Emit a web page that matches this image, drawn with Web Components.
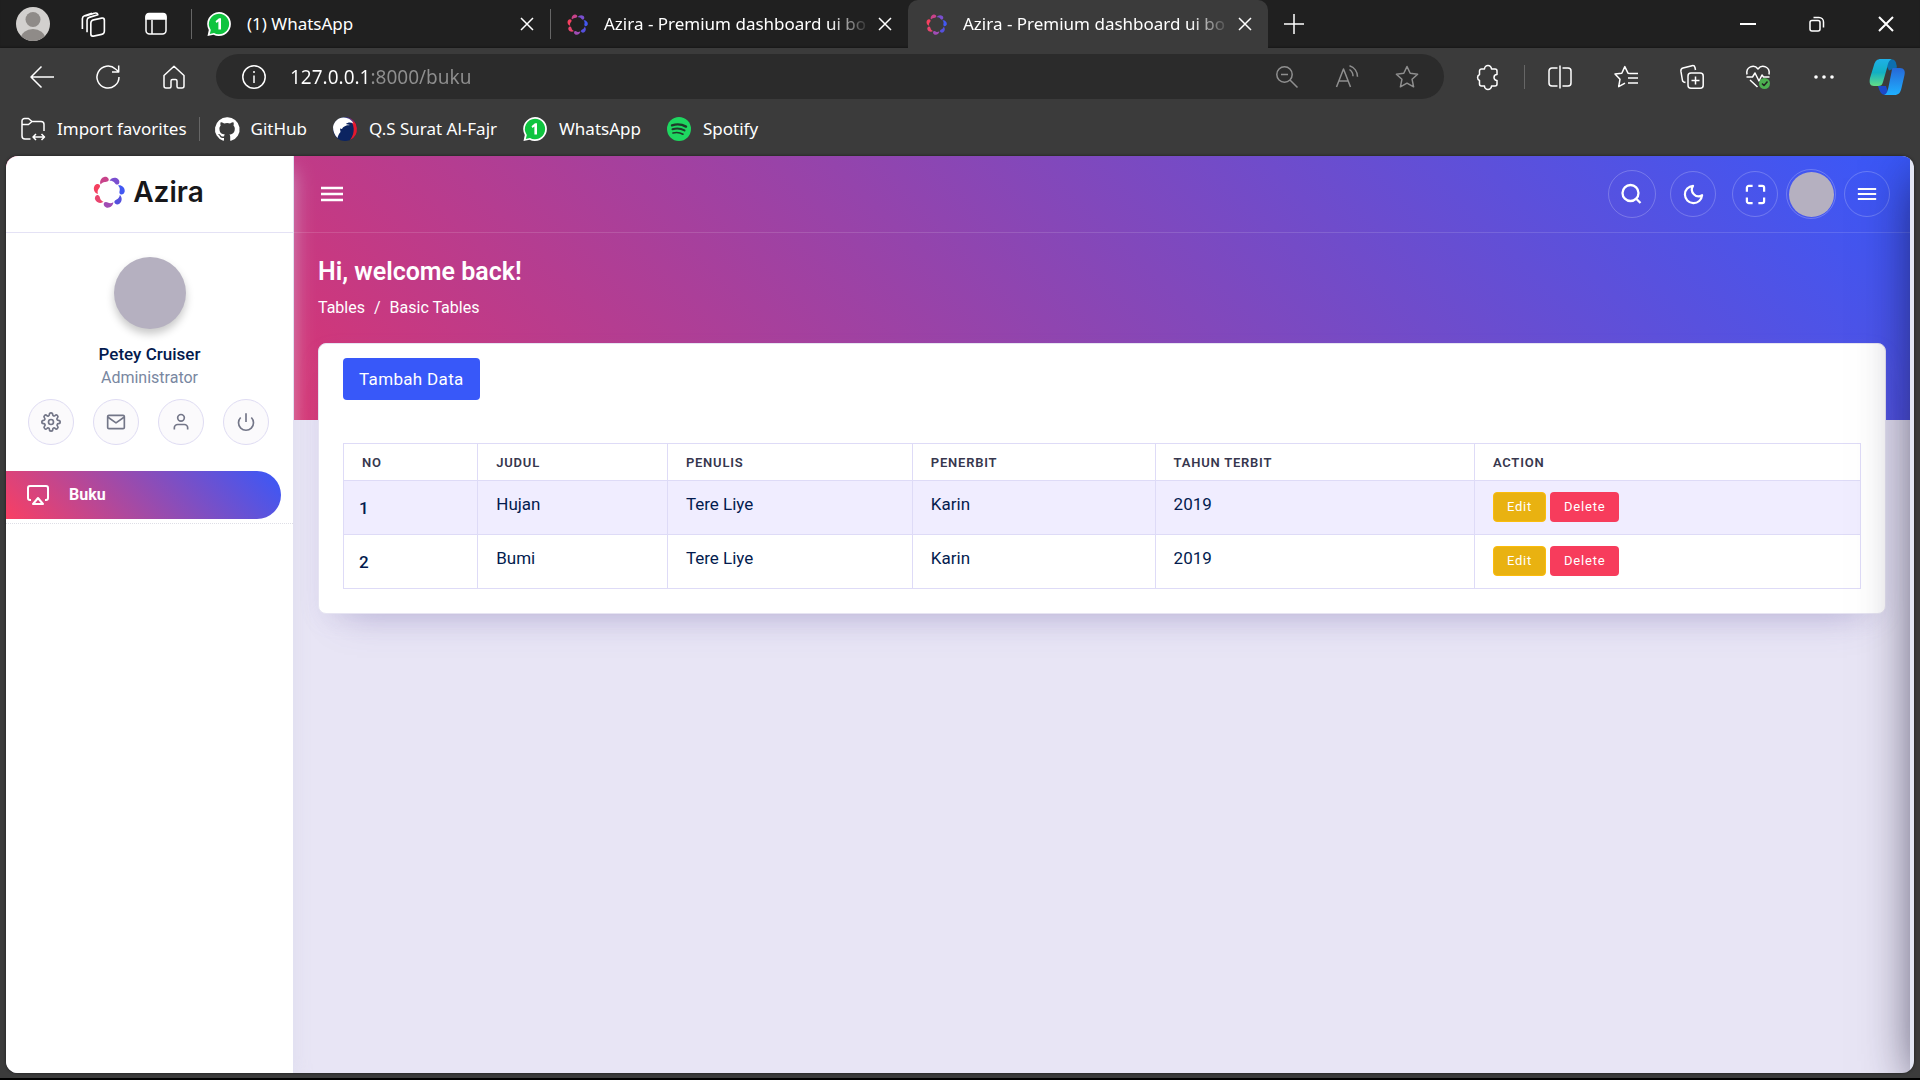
<!DOCTYPE html>
<html lang="en">
<head>
<meta charset="utf-8">
<meta name="viewport" content="width=device-width, initial-scale=1">
<title>Azira - Premium dashboard ui bo</title>
<style>
  html, body { margin: 0; height: 100%; }
  body { background: #000; overflow: hidden; }
</style>
</head>
<body>
<browser-window>
  <browser-tab slot="tabs" icon="whatsapp" label="(1) WhatsApp"></browser-tab>
  <browser-tab slot="tabs" icon="azira" label="Azira - Premium dashboard ui bo"></browser-tab>
  <browser-tab slot="tabs" icon="azira" label="Azira - Premium dashboard ui bo" active></browser-tab>
  <bookmark-link slot="bookmarks" icon="folder">Import favorites</bookmark-link>
  <bookmark-link slot="bookmarks" icon="github">GitHub</bookmark-link>
  <bookmark-link slot="bookmarks" icon="falcon">Q.S Surat Al-Fajr</bookmark-link>
  <bookmark-link slot="bookmarks" icon="whatsapp">WhatsApp</bookmark-link>
  <bookmark-link slot="bookmarks" icon="spotify">Spotify</bookmark-link>
  <azira-app>
    <azira-sidebar slot="sidebar" name="Petey Cruiser" role-name="Administrator">
      <azira-menu-item icon="airplay">Buku</azira-menu-item>
    </azira-sidebar>
    <azira-topbar></azira-topbar>
    <azira-heading></azira-heading>
    <azira-card><book-table></book-table></azira-card>
  </azira-app>
</browser-window>

<script>
const petals = ['#7a4fcf', '#4258f2', '#5550dd', '#a04cb4', '#e8456f', '#f5405f', '#c8438a'].map((c, i) =>
  `<path fill="${c}" transform="rotate(${i * 360 / 7} 16 16)" d="M16.600 4.800C18 1.800 22.500.8 25.200 3.200 27 5 26.600 7.800 24.900 8.500 23.300 9 22.300 7.800 21.300 6.500 20.200 5.200 18.600 4.700 16.600 4.800Z"/>`).join('');

/* Each entry: [viewBox size, markup]. Line icons inherit the stroke of the host. */
const ICONS = {
  profile: [34, '<g stroke="none"><circle cx="17" cy="17" r="17" fill="#d2d0ce"/><clipPath id="c"><circle cx="17" cy="17" r="17"/></clipPath><g clip-path="url(#c)" fill="#8f8b88"><circle cx="17" cy="12.500" r="7.500"/><ellipse cx="17" cy="31" rx="12" ry="9"/></g></g>'],
  workspaces: [24, '<rect x="10" y="6.800" width="12.500" height="15" rx="2.500" transform="skewY(-12) translate(0 4)"/><path d="M6.500 19.500V8.500a3 3 0 0 1 2-2.600L16.500 3.500a2 2 0 0 0-2.600-1.600L5 4.500M2.200 16.500V7a3 3 0 0 1 2-2.600L11 2"/>'],
  tabactions: [24, '<rect x="2" y="2" width="20" height="20" rx="3.500"/><path d="M2 4.500a3 3 0 0 1 3-3h14a3 3 0 0 1 3 3V7H2Z" fill="currentColor"/><path d="M8 8v14"/>'],
  whatsapp: [24, '<g stroke="none"><path d="M12 0a12 12 0 1 1-5.500 22.700L.5 24l1.300-6A12 12 0 0 1 12 0Z" fill="#fff"/><path d="M12 1.800a10.200 10.200 0 1 1-5 19.100l-4.200 1 1-4A10.200 10.200 0 0 1 12 1.800Z" fill="#0fc43f"/><path d="M8.500 9.200 12 6.200h2v11.300h-2.600V9.400L9.500 11Z" fill="#fff"/></g>'],
  azira: [32, `<g stroke="none">${petals}</g>`],
  close: [14, '<path d="m1 1 12 12m0-12-12 12"/>'],
  plus: [22, '<path d="M11 1v20M1 11h20"/>'],
  min: [16, '<path d="M0 8h16" stroke-width="2"/>'],
  restore: [16, '<rect x="1" y="4.500" width="10" height="10.500" rx="2"/><path d="M4.500 1.500H10A4.500 4.500 0 0 1 14.500 6v5.500"/>'],
  winclose: [16, '<path d="m1 1 14 14M15 1 1 15" stroke-width="2"/>'],
  back: [24, '<path d="M24 12H1M11.500 1.500 1 12l10.500 10.500"/>'],
  refresh: [24, '<path d="M23 12A11 11 0 1 1 19.500 4L22.500 6.500M22.700.5V7H16"/>'],
  home: [24, '<path d="M2 10.500 12 1.200l10 9.300V21a2 2 0 0 1-2 2h-3.500a1.500 1.500 0 0 1-1.500-1.500V16a1.500 1.500 0 0 0-1.500-1.500h-3A1.500 1.500 0 0 0 9 16v5.500A1.500 1.500 0 0 1 7.500 23H4a2 2 0 0 1-2-2Z"/>'],
  info: [24, '<circle cx="12" cy="12" r="11.200"/><path d="M12 10.500V18"/><circle cx="12" cy="7" r="1" fill="currentColor" stroke="none"/>'],
  zoomout: [24, '<circle cx="9.500" cy="9.500" r="7.700"/><path d="m15 15 7.500 7.500M6 9.500h7"/>'],
  read: [24, '<path d="m1.500 22 7-18 7 18M4 16h9M14.500 4.500a8 8 0 0 1 3.500 6.800M14.500.8a11.500 11.500 0 0 1 8 11"/>'],
  star: [24, '<path d="m12 1.500 3.200 6.800 7.400.9-5.500 5.100 1.500 7.500L12 18.200l-6.600 3.600 1.500-7.500L1.400 9.200l7.400-.9Z"/>'],
  ext: [24, '<path d="M5.500 4H8.500a3.500 3.500 0 0 1 7 0H19A2 2 0 0 1 21 6V9.500a3 3 0 0 0 0 6V19a2 2 0 0 1-2 2h-3.500a3.500 3.500 0 0 1-7 0H5.500a2 2 0 0 1-2-2v-3.500a3.300 3.300 0 0 1 0-6V6a2 2 0 0 1 2-2Z"/>'],
  split: [24, '<path d="M9.500 3H4a3 3 0 0 0-3 3v12a3 3 0 0 0 3 3h5.500M14.500 3H20a3 3 0 0 1 3 3v12a3 3 0 0 1-3 3h-5.500M12 .5v23"/>'],
  favs: [24, '<path d="M16 8.500 14 8.200 10.800 1.600 7.800 8.200 1 9l5 5.200-1.300 7.500 6.300-3.500M16 8.500h8M14 13h10M14 18h10"/>'],
  collections: [24, '<rect x="8" y="8" width="15.200" height="15.200" rx="3"/><path d="M15.500 11.500v8M11.500 15.500h8M5.500 17.500 3.800 17a2.500 2.500 0 0 1-1.500-2.500L.9 6.200A3 3 0 0 1 3 3l9-2.300a2.500 2.500 0 0 1 3 1.800l.5 2.500"/>'],
  heart: [24, '<path d="M1 9.500C-.5 2 8-1.500 12 4c4-5.500 12.500-2 11 5.500M.5 12h6L9 8l4 8 3-6 1.500 2h6M4 15l7.500 7"/><circle cx="18.500" cy="18.500" r="5.500" fill="#4caf50" stroke="none"/><path d="m16 18.500 2 2 3.500-4" stroke="#222" stroke-width="1.500"/>'],
  dots: [24, '<g fill="currentColor" stroke="none"><circle cx="4" cy="12" r="1.800"/><circle cx="12" cy="12" r="1.800"/><circle cx="20" cy="12" r="1.800"/></g>'],
  copilot: [36, '<defs><linearGradient id="a" x1="0" y1="0" x2="0" y2="1"><stop offset="0" stop-color="#1fb0e8"/><stop offset=".5" stop-color="#12b0c4"/><stop offset="1" stop-color="#62dc86"/></linearGradient><linearGradient id="b" x1="0" y1="0" x2="0" y2="1"><stop offset="0" stop-color="#2668d8"/><stop offset="1" stop-color="#1fb0ff"/></linearGradient></defs><g stroke="none"><path d="M14 .5h9c3 0 4 2 5 8l-8 3Z" fill="#0d6fae"/><path d="M8 27h9l3 9h-3c-5 0-6-3-8-9Z" fill="#1c49c9"/><path d="M12 0h11c-3 1-4 4-5 9l-4 14c-1 3-2 4-5 4H5c-4 0-5-3-4-8l4-13c1.200-4 3-6 7-6Z" fill="url(#a)"/><path d="M24 9h7c4 0 5.500 3 4.500 7l-3 13c-1.200 5-3 7-7 7H15c3-1 3.500-4 4.500-8l3-15c.5-2 .5-3.500 1.500-4Z" fill="url(#b)"/></g>'],
  folder: [24, '<path d="M9.500 22H4a3 3 0 0 1-3-3V4a2.500 2.500 0 0 1 2.500-2.500h4L11 4.500h9a3 3 0 0 1 3 3V14M1 7.500h6.500L11 4.500M12 20h12M15 17l-3 3 3 3M20.500 17l3 3-3 3"/>'],
  github: [24, '<path fill="#fff" stroke="none" d="M12 .3a12 12 0 0 0-3.800 23.400c.6.100.8-.3.800-.6v-2.200c-3.300.7-4-1.400-4-1.400-.6-1.400-1.400-1.800-1.400-1.800-1-.7.1-.7.1-.7 1.200.1 1.900 1.200 1.900 1.200 1 1.900 2.800 1.300 3.500 1 .1-.8.400-1.300.8-1.600-2.700-.3-5.500-1.300-5.500-6 0-1.200.5-2.300 1.300-3.100-.2-.4-.6-1.600 0-3.200 0 0 1-.3 3.400 1.200a11.500 11.500 0 0 1 6 0c2.300-1.500 3.300-1.200 3.300-1.200.7 1.600.2 2.800.1 3.200.8.800 1.300 1.900 1.300 3.200 0 4.600-2.800 5.600-5.500 5.900.5.400.9 1.100.9 2.300v3.300c0 .3.100.7.800.6A12 12 0 0 0 12 .3"/>'],
  falcon: [24, '<g stroke="none"><circle cx="12" cy="12" r="12" fill="#0c2461"/><path d="M15 .4A12 12 0 0 1 17 22.900 16 16 0 0 0 15 .4Z" fill="#e3192d"/><path d="M12 0a12 12 0 0 1 9.500 5.500L15 2.500Z" fill="#4a3d8c"/><path d="M0 10C1 4 6 0 11 .5c5 .5 8 3 9.500 6-3-1.500-6-1-7.500.5l4 1c-4.500.2-6.500 1.500-8 4l-2-.5.5 3.500C6 16.500 5 18.500 4.500 21 1.500 18.500 0 14 0 10Z" fill="#fff"/></g>'],
  spotify: [24, '<circle cx="12" cy="12" r="12" fill="#1ed760" stroke="none"/><g stroke="#1f3a2a" stroke-linecap="round"><path d="M5 8.300c5-1.500 10-1 14 1.300" stroke-width="2.400"/><path d="M5.500 12.200c4.500-1.200 8.500-.7 12 1.200" stroke-width="2"/><path d="M6 16c3.500-.9 7-.5 10 1.200" stroke-width="1.700"/></g>'],
  menu: [24, '<path d="M1 6h22M1 12h22M1 18h22" stroke-width="2.600"/>'],
  search: [24, '<circle cx="10.500" cy="11" r="8"/><path d="m16.500 17 4 4"/>'],
  moon: [24, '<path d="M21 12.800A9 9 0 1 1 11.500 3a7 7 0 0 0 9.500 9.800Z"/>'],
  expand: [24, '<path d="M3 9V5a2 2 0 0 1 2-2h4M15 3h4a2 2 0 0 1 2 2v4M21 15v4a2 2 0 0 1-2 2h-4M9 21H5a2 2 0 0 1-2-2v-4"/>'],
  gear: [24, '<circle cx="12" cy="12" r="3"/><path d="M19.400 15a1.650 1.650 0 0 0 .33 1.820l.06.06a2 2 0 0 1-2.830 2.830l-.06-.06a1.650 1.650 0 0 0-2.800 1.170V21a2 2 0 0 1-4 0v-.09A1.650 1.650 0 0 0 7.180 19.730l-.06.06a2 2 0 0 1-2.830-2.830l.06-.06A1.650 1.650 0 0 0 3.180 14H3a2 2 0 0 1 0-4h.09A1.650 1.650 0 0 0 4.270 7.180l-.06-.06a2 2 0 0 1 2.830-2.830l.06.06A1.650 1.650 0 0 0 10 3.180V3a2 2 0 0 1 4 0v.09a1.650 1.650 0 0 0 2.820 1.180l.06-.06a2 2 0 0 1 2.830 2.830l-.06.06A1.650 1.650 0 0 0 20.820 10H21a2 2 0 0 1 0 4h-.09a1.650 1.650 0 0 0-1.510 1Z"/>'],
  mail: [24, '<rect x="2" y="4" width="20" height="16" rx="1.500"/><path d="m2 6 10 7 10-7"/>'],
  user: [24, '<circle cx="12" cy="7" r="4"/><path d="M4 21v-2a4 4 0 0 1 4-4h8a4 4 0 0 1 4 4v2"/>'],
  power: [24, '<path d="M18.400 6.600a9 9 0 1 1-12.800 0M12 1.500V12"/>'],
  airplay: [24, '<path d="M5 17H4a2 2 0 0 1-2-2V5a2 2 0 0 1 2-2h16a2 2 0 0 1 2 2v10a2 2 0 0 1-2 2h-1M12 15l5 6H7Z"/>'],
};

class UiIcon extends HTMLElement {
  connectedCallback() {
    const [box, markup] = ICONS[this.getAttribute('name')];
    const size = this.getAttribute('size') || 24;
    this.attachShadow({ mode: 'open' }).innerHTML = `
      <style>
        :host { display: block; flex: none; width: ${size}px; height: ${size}px; }
        svg { display: block; width: 100%; height: 100%; overflow: visible; }
      </style>
      <svg viewBox="0 0 ${box} ${box}" fill="none" stroke="currentColor" stroke-width="${this.getAttribute('weight') || 1.5}" stroke-linejoin="round" aria-hidden="true">${markup}</svg>`;
  }
}
customElements.define('ui-icon', UiIcon);

class BrowserTab extends HTMLElement {
  connectedCallback() {
    const icon = this.getAttribute('icon');
    this.attachShadow({ mode: 'open' }).innerHTML = `
      <style>
        :host { display: flex; align-items: center; flex: 0 1 358px; min-width: 0; box-sizing: border-box;
          height: 48px; padding: 0 16px 0 15px; gap: 16px; border-radius: 10px 10px 0 0; color: #fff; }
        :host([active]) { background: #3b3b3b; padding-left: 18px; flex-basis: 360px; }
        :host(:not([active]):not(:first-of-type))::before { content: ""; width: 1px; height: 30px; background: #666; margin: 0 0 0 -15px; }
        span { flex: 1; overflow: hidden; white-space: nowrap; font-size: 17px; line-height: 24px; }
        span.long { margin-right: -8px; -webkit-mask: linear-gradient(90deg, #000 calc(100% - 40px), transparent); mask: linear-gradient(90deg, #000 calc(100% - 40px), transparent); }
        button { all: unset; display: flex; }
      </style>
      <ui-icon name="${icon}" size="${icon === 'azira' ? 21 : 24}"></ui-icon>
      <span class="${icon === 'azira' ? 'long' : ''}">${this.getAttribute('label')}</span>
      <button aria-label="Close tab"><ui-icon name="close" size="14"></ui-icon></button>`;
  }
}
customElements.define('browser-tab', BrowserTab);

class BookmarkLink extends HTMLElement {
  connectedCallback() {
    this.attachShadow({ mode: 'open' }).innerHTML = `
      <style>
        :host { display: block; }
        a { display: flex; align-items: center; gap: 12px; color: #fff; text-decoration: none; font-size: 17px; line-height: 24px; white-space: nowrap; }
      </style>
      <a href="#"><ui-icon name="${this.getAttribute('icon')}"></ui-icon><slot></slot></a>`;
  }
}
customElements.define('bookmark-link', BookmarkLink);

class BrowserWindow extends HTMLElement {
  connectedCallback() {
    const tool = (name, label, size = 24) => `<button aria-label="${label}"><ui-icon name="${name}" size="${size}"></ui-icon></button>`;
    this.attachShadow({ mode: 'open' }).innerHTML = `
      <style>
        :host { display: flex; flex-direction: column; height: calc(100vh - 2px); background: #3b3b3b; color: #fff; font-family: "Noto Sans", "Open Sans", sans-serif; }
        button { all: unset; display: flex; }
        .strip { display: flex; align-items: center; height: 48px; flex: none; background: #202020; padding: 0 26px 0 16px; box-shadow: inset 0 -2px 2px -1px #181818; }
        .strip > .tools { display: flex; align-items: center; gap: 30px; padding-right: 23px; border-right: 1px solid #666; height: 30px; }
        .strip > .tools button:last-child { margin-left: 8px; }
        .tabs { display: flex; flex: 1; min-width: 0; }
        .new { align-self: center; margin-left: 15px; }
        .win { display: flex; gap: 53px; }
        .nav { display: flex; align-items: center; height: 57px; flex: none; padding: 0 15px 0 30px; }
        .nav > .left { display: flex; gap: 42px; margin-right: 30px; }
        .url { display: flex; align-items: center; flex: 1; min-width: 0; height: 45px; border-radius: 23px; background: #2b2b2b; box-sizing: border-box; padding: 0 25px 0 26px; }
        .url input { all: unset; flex: 1; min-width: 0; margin-left: 24px; font-size: 19px; line-height: 28px; color: #fff;
          background: linear-gradient(90deg, #fff 78px, #8f8f8f 78px); -webkit-background-clip: text; background-clip: text; -webkit-text-fill-color: transparent; }
        .url .acts { display: flex; gap: 36px; color: #8f8f8f; }
        .right { display: flex; align-items: center; gap: 42px; margin-left: 32px; }
        .right button:first-child { padding-right: 24px; border-right: 1px solid #666; margin-right: -19px; }
        .right button:last-child { margin-left: -9px; }
        .marks { display: flex; align-items: center; gap: 26px; height: 48px; flex: none; padding: 0 21px 3px; }
        .marks ::slotted(:first-of-type) { padding-right: 12px; border-right: 1px solid #666; margin-right: -11px; }
        .page { flex: 1; min-height: 0; margin: 0 6px 5px; border-radius: 12px; overflow: hidden; display: flex; box-shadow: 0 0 3px #1c1c1c; }
        .scroll { flex: none; width: 4px; background: #e3e6f4; }
        .page slot { display: contents; }
        .page ::slotted(*) { flex: 1; min-width: 0; }
      </style>
      <header class="strip">
        <div class="tools">${tool('profile', 'Profile', 34)}${tool('workspaces', 'Workspaces', 26)}${tool('tabactions', 'Tab actions')}</div>
        <div class="tabs"><slot name="tabs"></slot><button class="new" aria-label="New tab"><ui-icon name="plus" size="22"></ui-icon></button></div>
        <div class="win">${tool('min', 'Minimize', 16)}${tool('restore', 'Restore', 16)}${tool('winclose', 'Close', 16)}</div>
      </header>
      <div class="nav">
        <div class="left">${tool('back', 'Back')}${tool('refresh', 'Refresh')}${tool('home', 'Home')}</div>
        <div class="url"><ui-icon name="info"></ui-icon><input type="text" aria-label="Address" value="127.0.0.1:8000/buku">
          <div class="acts">${tool('zoomout', 'Zoom')}${tool('read', 'Read aloud')}${tool('star', 'Favorite')}</div></div>
        <div class="right">${tool('ext', 'Extensions')}${tool('split', 'Split screen')}${tool('favs', 'Favorites')}${tool('collections', 'Collections')}${tool('heart', 'Browser essentials')}${tool('dots', 'Settings')}${tool('copilot', 'Copilot', 36)}</div>
      </div>
      <nav class="marks"><slot name="bookmarks"></slot></nav>
      <div class="page"><slot></slot><div class="scroll"></div></div>`;
  }
}
customElements.define('browser-window', BrowserWindow);

class AziraApp extends HTMLElement {
  connectedCallback() {
    this.attachShadow({ mode: 'open' }).innerHTML = `
      <style>
        :host { display: flex; position: relative; overflow: hidden; font-family: Roboto, sans-serif; font-size: 16px; line-height: 24px; color: #031b4e;
          background: linear-gradient(45deg, #f0305f, #3858f9) top / 100% 264px no-repeat, #e8e5f5; }
        main { flex: 1; min-width: 0; display: flex; flex-direction: column; }
        .drawer { position: absolute; left: 100%; top: 0; bottom: 0; width: 300px; box-shadow: 0 14px 50px -8px rgba(16, 12, 40, .78); }
      </style>
      <slot name="sidebar"></slot>
      <main><slot></slot></main>
      <div class="drawer"></div>`;
  }
}
customElements.define('azira-app', AziraApp);

class AziraSidebar extends HTMLElement {
  connectedCallback() {
    const round = (name, label) => `<button aria-label="${label}"><ui-icon name="${name}" size="20" weight="2"></ui-icon></button>`;
    this.attachShadow({ mode: 'open' }).innerHTML = `
      <style>
        :host { display: block; flex: none; width: 287px; background: #fff; border-right: 1px solid #e2e1f2; z-index: 1; box-shadow: 3px 10px 20px -4px rgba(213, 213, 233, .6); }
        .logo { display: flex; align-items: center; justify-content: center; height: 76px; border-bottom: 1px solid #e4e2f5; }
        .logo a { display: flex; align-items: center; gap: 8px; padding: 0 2px 4px 0; color: #17171a; text-decoration: none; font: 600 28px/32px Inter, sans-serif; }
        .who { display: flex; flex-direction: column; align-items: center; padding-top: 24px; text-align: center; }
        .pic { width: 72px; height: 72px; border-radius: 50%; background: #b5b0c0; box-shadow: 0 5px 8px rgba(0, 0, 0, .22); margin-bottom: 13px; }
        h2 { margin: 0; font-size: 17px; line-height: 24px; font-weight: 500; }
        p { margin: 0; color: #7987a1; line-height: 24px; }
        .acts { display: flex; justify-content: center; gap: 19px; padding: 9px 3px 26px 0; }
        button { all: unset; box-sizing: border-box; width: 46px; height: 46px; border: 1px solid #dfdcf3; border-radius: 50%; background: #fbfafc; color: #737688; display: flex; align-items: center; justify-content: center; }
        nav { border-bottom: 1px dotted #dedee6; padding-bottom: 4px; }
      </style>
      <div class="logo"><a href="#"><ui-icon name="azira" size="32"></ui-icon>Azira</a></div>
      <div class="who"><div class="pic"></div><h2>${this.getAttribute('name')}</h2><p>${this.getAttribute('role-name')}</p></div>
      <div class="acts">${round('gear', 'Settings')}${round('mail', 'Messages')}${round('user', 'Profile')}${round('power', 'Log out')}</div>
      <nav><slot></slot></nav>`;
  }
}
customElements.define('azira-sidebar', AziraSidebar);

class AziraMenuItem extends HTMLElement {
  connectedCallback() {
    this.attachShadow({ mode: 'open' }).innerHTML = `
      <style>
        :host { display: block; margin-right: 12px; }
        a { display: flex; align-items: center; gap: 19px; height: 48px; padding-left: 20px; border-radius: 0 24px 24px 0; color: #fff; text-decoration: none; font-weight: 700;
          background: linear-gradient(45deg, #f93f63, #3858f9); }
      </style>
      <a href="#"><ui-icon name="${this.getAttribute('icon')}" size="24" weight="2"></ui-icon><slot></slot></a>`;
  }
}
customElements.define('azira-menu-item', AziraMenuItem);

class AziraTopbar extends HTMLElement {
  connectedCallback() {
    this.attachShadow({ mode: 'open' }).innerHTML = `
      <style>
        :host { display: flex; align-items: center; justify-content: space-between; height: 76px; padding: 0 20px 0 26px; border-bottom: 1px solid rgba(255, 255, 255, .13); color: #fff; }
        button { all: unset; display: flex; align-items: center; justify-content: center; }
        .right { display: flex; align-items: center; }
        .right button { box-sizing: border-box; width: 46px; height: 46px; border: 1px solid rgba(255, 255, 255, .22); border-radius: 50%; margin-left: 16px; }
        .right .search { width: 48px; height: 48px; margin-right: -2px; }
        .right .me { width: 50px; height: 50px; margin: 0 -8px 0 8px; }
        .me i { width: 45px; height: 45px; border-radius: 50%; background: #b5b0c0; }
      </style>
      <button aria-label="Toggle menu"><ui-icon name="menu" size="24"></ui-icon></button>
      <div class="right">
        <button class="search" aria-label="Search"><ui-icon name="search" size="24" weight="2.300"></ui-icon></button>
        <button aria-label="Dark mode"><ui-icon name="moon" size="23" weight="2.300"></ui-icon></button>
        <button aria-label="Fullscreen"><ui-icon name="expand" size="23" weight="2.300"></ui-icon></button>
        <button class="me" aria-label="Account"><i></i></button>
        <button aria-label="Notifications"><ui-icon name="menu" size="20"></ui-icon></button>
      </div>`;
  }
}
customElements.define('azira-topbar', AziraTopbar);

class AziraHeading extends HTMLElement {
  connectedCallback() {
    this.attachShadow({ mode: 'open' }).innerHTML = `
      <style>
        :host { display: block; padding: 23px 24px; color: #fff; }
        h1 { margin: 0 0 8px; font-size: 25px; line-height: 32px; font-weight: 600; }
        nav { display: flex; gap: 9px; line-height: 24px; }
        a { color: inherit; text-decoration: none; }
      </style>
      <h1>Hi, welcome back!</h1>
      <nav aria-label="Breadcrumb"><a href="#">Tables</a><span>/</span><a href="#">Basic Tables</a></nav>`;
  }
}
customElements.define('azira-heading', AziraHeading);

class AziraCard extends HTMLElement {
  connectedCallback() {
    this.attachShadow({ mode: 'open' }).innerHTML = `
      <style>
        :host { display: block; margin: 0 24px; padding: 14px 24px 24px; background: #fff; border: 1px solid #e6e4f2; border-radius: 8px; box-shadow: 0 26px 36px -26px rgba(100, 85, 160, .36), 0 8px 24px -4px rgba(160, 155, 205, .14); }
        .add { all: unset; display: block; width: max-content; height: 42px; padding: 0 16px; border-radius: 4px; background: #3858f9; color: #fff; font-size: 17px; line-height: 42px; letter-spacing: .02em; margin-bottom: 43px; }
      </style>
      <button class="add">Tambah Data</button>
      <slot></slot>`;
  }
}
customElements.define('azira-card', AziraCard);

class BookTable extends HTMLElement {
  connectedCallback() {
    const books = [['Hujan', 'Tere Liye', 'Karin', '2019'], ['Bumi', 'Tere Liye', 'Karin', '2019']];
    this.attachShadow({ mode: 'open' }).innerHTML = `
      <style>
        :host { display: block; }
        table { width: 100%; border-collapse: collapse; table-layout: fixed; color: #031b4e; }
        th, td { border: 1px solid #dedbf7; text-align: left; vertical-align: top; box-sizing: border-box; }
        thead th { height: 37px; padding: 2px 18px 0; vertical-align: middle; color: #37374e; font-size: 13px; line-height: 16px; font-weight: 600; letter-spacing: .06em; text-transform: uppercase; }
        tbody th { padding: 15px 15px 14px; font-weight: 500; font-size: 17px; line-height: 24px; }
        td { padding: 11px 18px; font-size: 17px; line-height: 24px; }
        tbody tr:nth-child(odd) { background: #f0edff; }
        .acts { display: flex; gap: 4px; }
        button { all: unset; box-sizing: border-box; height: 30px; padding: 0 14px; border-radius: 4px; background: #f73c5c; color: #fff; font-size: 13px; line-height: 30px; font-weight: 400; letter-spacing: .06em; }
        .edit { border: 1px solid #fbbc0b; background: #e9b211; line-height: 28px; padding: 0 13px; }
      </style>
      <table>
        <colgroup><col style="width:8.850%"><col style="width:12.500%"><col style="width:16.150%"><col style="width:16%"><col style="width:21.050%"><col></colgroup>
        <thead><tr><th>No</th><th>Judul</th><th>Penulis</th><th>Penerbit</th><th>Tahun Terbit</th><th>Action</th></tr></thead>
        <tbody>${books.map((b, i) => `<tr><th scope="row">${i + 1}</th>${b.map(v => `<td>${v}</td>`).join('')}<td><div class="acts"><button class="edit">Edit</button><button>Delete</button></div></td></tr>`).join('')}</tbody>
      </table>`;
  }
}
customElements.define('book-table', BookTable);
</script>
</body>
</html>
